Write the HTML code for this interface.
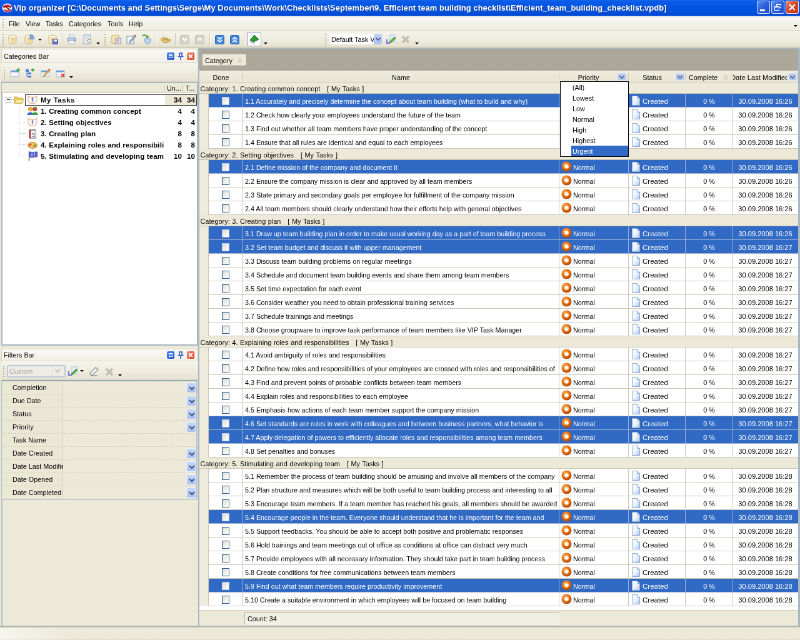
<!DOCTYPE html>
<html><head><meta charset="utf-8"><title>Vip organizer</title>
<style>
html,body{margin:0;padding:0;background:#ECE9D8;}
body{width:800px;height:640px;overflow:hidden;position:relative;}
#app{position:absolute;left:0;top:0;width:1280px;height:1024px;transform:scale(.625);transform-origin:0 0;
 font-family:"Liberation Sans",sans-serif;font-size:10.8px;color:#000;overflow:hidden;will-change:transform;}
#app div,#app span,#app svg{position:absolute;box-sizing:border-box;white-space:pre;}
.t{line-height:14px;height:14px;}
.b{font-weight:bold;font-size:11.5px;letter-spacing:.12px;}
.tb{background:linear-gradient(#F5F4EB,#EFEDE0 50%,#E7E4D3 90%,#D8D4C1);}
.grip{width:3px;border-left:2px dotted #B5B19F;}
.sep{width:2px;border-left:1px solid #C5C2B0;border-right:1px solid #fff;}
.arr{width:0;height:0;border:3px solid transparent;border-top:3px solid #000;border-bottom:none;}
.ptitle{background:linear-gradient(#FBFAF7,#F1EFE6);border:1px solid #DAD6C4;border-radius:4px 4px 0 0;}
.row{left:319px;width:958px;height:22px;background:#fff;}
.row.sel{background:#316AC5;color:#fff;}
.row .ind{left:0;top:0;width:15px;height:22px;background:#EEEBDC;border-right:1px solid #CAC7BA;}
.row .ln{top:0;width:1px;height:22px;background:#CAC7BA;}
.row.sel .ln{background:#9CADD0;}
.row .hb{left:15px;right:0;bottom:0;height:1px;background:#CAC7BA;}
.row.sel .hb{background:#9CADD0;}
.cat{left:319px;width:958px;height:18px;background:#ECE9D8;border-bottom:1px solid #C9C6B5;}
.cb{left:35.500px;top:5px;width:12.500px;height:12.500px;border:1px solid #2C5C8C;background:linear-gradient(135deg,#DCDCD7,#F3F3EF 60%,#fff);}
.sel .cb{border-color:#B8CCEC;}
.fbtn{width:14px;height:12px;background:#B4C6EE;border:1px solid #DCE5F8;}
.hd{top:3px;height:13px;border-right:1px solid #CFCBBA;}
.frow{left:3px;width:311px;height:21px;border-bottom:1px dashed #D6D3C3;}
.dd{left:295px;top:2px;width:16px;height:17px;background:linear-gradient(#C9D7F8,#ABC0F0);border:1px solid #EEF2FB;border-radius:3px;}
</style></head><body><div id="app">

<div style="left:0;top:0;width:1280px;height:26px;background:linear-gradient(#1565EE 0,#0A5CE8 10%,#0354E0 50%,#0453E2 76%,#0248CC 88%,#0A50D8 94%,#2A70F0 100%);"></div>
<svg style="left:3px;top:4px" width="17" height="17" viewBox="0 0 17 17"><ellipse cx="8.5" cy="8.5" rx="8" ry="7" fill="#F4F0F0"/><path d="M1 6 Q8 1 16 6 L14 9 Q8 5 3 9Z" fill="#C8202C"/><path d="M3 10 Q8 14 15 10 L13 14 Q8 16 4 14Z" fill="#D84050"/><path d="M4 5 L13 12" stroke="#8A1820" stroke-width="2"/></svg>
<span style="left:22px;top:4px;height:18px;line-height:18px;font-size:13px;font-weight:bold;color:#fff;letter-spacing:0.03px;text-shadow:1px 1px 0 #0A2A80;">Vip organizer [C:\Documents and Settings\Serge\My Documents\Work\Checklists\September\9. Efficient team building checklist\Efficient_team_building_checklist.vpdb]</span>
<div style="left:1211px;top:1px;width:21px;height:21px;border:1px solid rgba(255,255,255,.8);border-radius:3px;background:linear-gradient(135deg,#5C92F5,#2D62DB 45%,#2050C8);"></div>
<div style="left:1234px;top:1px;width:21px;height:21px;border:1px solid rgba(255,255,255,.8);border-radius:3px;background:linear-gradient(135deg,#5C92F5,#2D62DB 45%,#2050C8);"></div>
<div style="left:1257px;top:1px;width:21px;height:21px;border:1px solid rgba(255,255,255,.8);border-radius:3px;background:linear-gradient(135deg,#E9866A,#D6482A 45%,#C2371C);"></div>
<div style="left:1216px;top:15px;width:8px;height:3px;background:#fff;"></div>
<div style="left:1242px;top:6px;width:8px;height:7px;border:1px solid #fff;border-top-width:2px;"></div>
<div style="left:1239px;top:10px;width:8px;height:7px;border:1px solid #fff;border-top-width:2px;background:#2D62DB;"></div>
<svg style="left:1262px;top:6px" width="11" height="11" viewBox="0 0 11 11"><path d="M1 1L10 10M10 1L1 10" stroke="#fff" stroke-width="2.2"/></svg>
<div style="left:0;top:26px;width:1280px;height:23px;background:linear-gradient(#F8F7F2,#F0EEE2);border-bottom:1px solid #D8D4C2;"></div>
<div class="grip" style="left:4px;top:30px;height:15px;"></div>
<span class="t " style="left:14px;top:31px;">File</span>
<span class="t " style="left:41px;top:31px;">View</span>
<span class="t " style="left:73px;top:31px;">Tasks</span>
<span class="t " style="left:110px;top:31px;">Categories</span>
<span class="t " style="left:172px;top:31px;">Tools</span>
<span class="t " style="left:206px;top:31px;">Help</span>
<div class="arr" style="left:1270px;top:40px;"></div>
<div class="tb" style="left:0;top:49px;width:1280px;height:28px;border-bottom:1px solid #C9C5B2;"></div>
<div class="grip" style="left:4px;top:54px;height:19px;"></div>
<div class="grip" style="left:520px;top:54px;height:19px;"></div>
<div class="grip" style="left:167px;top:54px;height:19px;"></div>
<div class="sep" style="left:99px;top:53px;height:20px;"></div>
<div class="sep" style="left:249px;top:53px;height:20px;"></div>
<div class="sep" style="left:280px;top:53px;height:20px;"></div>
<div class="sep" style="left:335px;top:53px;height:20px;"></div>
<div class="sep" style="left:390px;top:53px;height:20px;"></div>
<div class="arr" style="left:61px;top:62px;"></div>
<div class="arr" style="left:154px;top:68px;"></div>
<div class="arr" style="left:422px;top:68px;"></div>
<div class="arr" style="left:664px;top:68px;"></div>
<svg style="left:13px;top:55px" width="16" height="16" viewBox="0 0 16 16"><path d="M1 3.5V12.5C1 14 4 15 7 15S13 14 13 12.5V3.5" fill="#F4E6AC" stroke="#C8AC70" stroke-width=".9"/><ellipse cx="7" cy="3.5" rx="6" ry="2.5" fill="#FFFBE4" stroke="#C8AC70" stroke-width=".9"/><path d="M1 7C2 8.5 12 8.5 13 7M1 10C2 11.5 12 11.5 13 10" fill="none" stroke="#D0B478" stroke-width=".8"/><path d="M3 5.500v8" stroke="#FFFDF0" stroke-width="1.600"/></svg>
<svg style="left:39px;top:55px" width="16" height="16" viewBox="0 0 16 16"><path d="M1 3.5V12.5C1 14 4 15 7 15S13 14 13 12.5V3.5" fill="#F4E6AC" stroke="#C8AC70" stroke-width=".9"/><ellipse cx="7" cy="3.5" rx="6" ry="2.5" fill="#FFFBE4" stroke="#C8AC70" stroke-width=".9"/><path d="M1 7C2 8.5 12 8.5 13 7M1 10C2 11.5 12 11.5 13 10" fill="none" stroke="#D0B478" stroke-width=".8"/><path d="M3 5.500v8" stroke="#FFFDF0" stroke-width="1.600"/><path d="M9 1h4l2.500 2.500v4h-6.500z" fill="#86A8E4" stroke="#4C6CB4" stroke-width=".8"/></svg>
<svg style="left:77px;top:55px" width="16" height="16" viewBox="0 0 16 16"><path d="M1 3.5V12.5C1 14 4 15 7 15S13 14 13 12.5V3.5" fill="#F4E6AC" stroke="#C8AC70" stroke-width=".9"/><ellipse cx="7" cy="3.5" rx="6" ry="2.5" fill="#FFFBE4" stroke="#C8AC70" stroke-width=".9"/><path d="M1 7C2 8.5 12 8.5 13 7M1 10C2 11.5 12 11.5 13 10" fill="none" stroke="#D0B478" stroke-width=".8"/><path d="M3 5.500v8" stroke="#FFFDF0" stroke-width="1.600"/><rect x="7.500" y="8" width="8" height="7.500" fill="#5C6CC4" stroke="#3C4890" stroke-width=".8"/><rect x="9" y="8.500" width="5" height="3" fill="#F0F2FC"/></svg>
<svg style="left:107px;top:55px" width="16" height="16" viewBox="0 0 16 16"><rect x="3.500" y="1" width="8" height="5" fill="#fff" stroke="#8C9CB8" stroke-width=".8"/><rect x="1.500" y="5.500" width="12" height="6" rx="1" fill="#B8C8E8" stroke="#6478A8" stroke-width=".9"/><rect x="3.500" y="10" width="8" height="5" fill="#fff" stroke="#8C9CB8" stroke-width=".8"/></svg>
<svg style="left:132px;top:55px" width="16" height="16" viewBox="0 0 16 16"><rect x="2" y="1" width="11" height="14" fill="#F2F6FC" stroke="#8FA3C6"/><path d="M4 4h7M4 7h7M4 10h5" stroke="#9CB4DC" stroke-width="1"/><circle cx="11" cy="11" r="3" fill="#DDE9F9" stroke="#C89048"/></svg>
<svg style="left:178px;top:55px" width="16" height="16" viewBox="0 0 16 16"><rect x="1" y="2" width="11" height="12" fill="#FFF3C0" stroke="#C8A040"/><rect x="6" y="6" width="9" height="9" fill="#F2F6FC" stroke="#7C8CA8"/><path d="M8 9h5M8 12h5" stroke="#C84040" stroke-width="1"/></svg>
<svg style="left:202px;top:55px" width="16" height="16" viewBox="0 0 16 16"><rect x="1" y="3" width="11" height="12" fill="#F2F6FC" stroke="#7C8CA8"/><path d="M5 11L14 1.5L15.5 3L7 12.5L4.5 13Z" fill="#9CB0D4" stroke="#5C6C94" stroke-width=".8"/><path d="M13 1l2.5 2" stroke="#E05040" stroke-width="2"/></svg>
<svg style="left:226px;top:55px" width="16" height="16" viewBox="0 0 16 16"><path d="M2 2C6 0 9 2 10 5" fill="none" stroke="#4C9C3C" stroke-width="2"/><path d="M7 4l4 3 1-5z" fill="#4C9C3C"/><path d="M5 7c0 5 2 7 5.500 8.500C14 14 15 12 15 7 12 7.500 9 7 8 6 7 7 6 7.500 5 7z" fill="#BFD6F4" stroke="#6C94D4"/></svg>
<svg style="left:256px;top:56px" width="18" height="16" viewBox="0 0 18 16"><path d="M1 7L5 4L10 5L17 8L12 12L6 12Z" fill="#E8C46C" stroke="#A87C2C" stroke-width="1"/><path d="M5 8l4-2 4 3" fill="none" stroke="#A87C2C"/></svg>
<svg style="left:288px;top:56px" width="15" height="15" viewBox="0 0 15 15"><rect x="0.5" y="0.5" width="14" height="14" rx="2" fill="#D6D4CA" stroke="#BEBBAE"/><path d="M4 5l3.500 4L11 5" fill="none" stroke="#fff" stroke-width="2"/></svg>
<svg style="left:312px;top:56px" width="15" height="15" viewBox="0 0 15 15"><rect x="0.5" y="0.5" width="14" height="14" rx="2" fill="#D6D4CA" stroke="#BEBBAE"/><path d="M4 9l3.500-4L11 9" fill="none" stroke="#fff" stroke-width="2"/></svg>
<svg style="left:344px;top:56px" width="15" height="15" viewBox="0 0 15 15"><rect x="0.5" y="0.5" width="14" height="14" rx="2" fill="#3F86DC" stroke="#2C62B4"/><path d="M4 3.500l3.500 3L11 3.500M4 8l3.500 3L11 8" fill="none" stroke="#fff" stroke-width="1.800"/></svg>
<svg style="left:368px;top:56px" width="15" height="15" viewBox="0 0 15 15"><rect x="0.5" y="0.5" width="14" height="14" rx="2" fill="#3F86DC" stroke="#2C62B4"/><path d="M4 7l3.500-3L11 7M4 11.500l3.500-3L11 11.500" fill="none" stroke="#fff" stroke-width="1.800"/></svg>
<div style="left:395px;top:51px;width:23px;height:23px;background:#fff;border:1px solid #8A9CBC;border-radius:2px;"></div>
<svg style="left:398px;top:54px" width="18" height="17" viewBox="0 0 18 17"><path d="M2 10L9 2L16 9L8 13Z" fill="#2E9A36" stroke="#1C6C24" stroke-width="1"/><path d="M2 11l6 3 1 2-6-2z" fill="#C8D8EC" stroke="#8CA0BC" stroke-width=".7"/></svg>
<div style="left:528px;top:54px;width:83px;height:17px;background:#fff;overflow:hidden;"><span class="t" style="left:2px;top:2px;">Default Task View</span><div style="left:70px;top:0;width:13px;height:17px;background:linear-gradient(#C4D4F8,#AEC2F2);border-radius:2px;"></div></div>
<svg style="left:601px;top:60px" width="8" height="6" viewBox="0 0 8 6"><path d="M0.5 0.5 L4 4 L7.5 0.5" fill="none" stroke="#3C5080" stroke-width="1.6"/></svg>
<svg style="left:618px;top:55px" width="18" height="16" viewBox="0 0 18 16"><path d="M1 8v6h5" fill="none" stroke="#7C74D4" stroke-width="2"/><rect x="6" y="1" width="8" height="11" fill="#E9F1FC" stroke="#9CB4DC" stroke-width=".8"/><path d="M5 12l8-8 2 2-8 8z" fill="#4CB43C" stroke="#2C7C24" stroke-width=".7"/></svg>
<svg style="left:642px;top:56px" width="14" height="14" viewBox="0 0 14 14"><path d="M2 2L12 12M12 2L2 12" stroke="#C3C0B3" stroke-width="3.600"/></svg>
<div class="ptitle" style="left:2px;top:78px;width:314px;height:23px;"></div>
<span class="t " style="left:6px;top:83px;">Categories Bar</span>
<div style="left:267px;top:84px;width:12px;height:12px;background:linear-gradient(135deg,#4C8CF0,#1C50C8);border-radius:2px;"></div>
<div style="left:270px;top:87px;width:6px;height:6px;border:1px solid #fff;border-top-width:2px;"></div>
<svg style="left:283px;top:84px" width="12" height="12" viewBox="0 0 12 12"><path d="M3 1h6M4 1v5M8 1v5M1.500 6.500h9M6 7v5" stroke="#2C5CC4" stroke-width="1.600" fill="none"/></svg>
<div style="left:299px;top:84px;width:12px;height:12px;background:linear-gradient(135deg,#F08C6C,#D03C1C);border-radius:2px;"></div>
<svg style="left:301px;top:86px" width="8" height="8" viewBox="0 0 8 8"><path d="M1 1L7 7M7 1L1 7" stroke="#fff" stroke-width="1.800"/></svg>
<div class="tb" style="left:2px;top:101px;width:314px;height:30px;"></div>
<div class="grip" style="left:6px;top:107px;height:19px;"></div>
<svg style="left:16px;top:109px" width="16" height="16" viewBox="0 0 16 16"><rect x="1" y="4" width="13" height="10" fill="#F6F8FC" stroke="#A4B4D0" stroke-width=".9"/><rect x="1" y="4" width="13" height="2.500" fill="#6C9CE0"/><path d="M1.500 13.500h12" stroke="#C8D0DC" stroke-width="1.500"/><path d="M9 3h6M12.500 0.500L15 3l-2.500 2.500" fill="none" stroke="#3CA43C" stroke-width="1.600"/></svg>
<svg style="left:40px;top:109px" width="16" height="16" viewBox="0 0 16 16"><rect x="1" y="2" width="5" height="4" fill="#4C7CD4"/><rect x="5" y="7" width="5" height="3" fill="#4C7CD4"/><rect x="5" y="12" width="5" height="3" fill="#4C7CD4"/><path d="M3 6v7.500h2M3 8.500h2" fill="none" stroke="#4C7CD4"/><path d="M10 3h5M12.500 0.500v5" stroke="#3CA43C" stroke-width="1.800"/></svg>
<svg style="left:65px;top:109px" width="16" height="16" viewBox="0 0 16 16"><rect x="1" y="4" width="13" height="10" fill="#F6F8FC" stroke="#A4B4D0" stroke-width=".9"/><rect x="1" y="4" width="13" height="2.500" fill="#6C9CE0"/><path d="M1.500 13.500h12" stroke="#C8D0DC" stroke-width="1.500"/><path d="M5 11L13 2l2 1.500L7 12.500l-2.500.5z" fill="#E8B84C" stroke="#8A5A20" stroke-width=".7"/><path d="M13 1.500l2 2" stroke="#D84040" stroke-width="2"/></svg>
<svg style="left:89px;top:109px" width="16" height="16" viewBox="0 0 16 16"><rect x="1" y="4" width="13" height="10" fill="#F6F8FC" stroke="#A4B4D0" stroke-width=".9"/><rect x="1" y="4" width="13" height="2.500" fill="#6C9CE0"/><path d="M1.500 13.500h12" stroke="#C8D0DC" stroke-width="1.500"/><path d="M9 9l5 5M14 9l-5 5" stroke="#E03C2C" stroke-width="1.800"/></svg>
<div class="arr" style="left:111px;top:122px;"></div>
<div style="left:2px;top:131px;width:315px;height:422px;background:#fff;border:2px solid #A7B7C3;"></div>
<div style="left:3px;top:133px;width:312px;height:16px;background:#ECE9D8;border-bottom:1px solid #CBC7B6;"></div>
<div style="left:262px;top:136px;width:1px;height:11px;background:#C5C2B0;"></div>
<div style="left:292px;top:136px;width:1px;height:11px;background:#C5C2B0;"></div>
<span class="t " style="left:267px;top:134px;">Un...</span>
<span class="t " style="left:297px;top:134px;">T...</span>
<div style="left:264px;top:151px;width:50px;height:17px;background:#ECE9D8;"></div>
<div style="left:40px;top:151px;width:275px;height:18px;border:1px solid #33322C;"></div>
<div style="left:9px;top:155px;width:9px;height:9px;border:1px solid #8CA0B8;background:#fff;"></div><div style="left:11px;top:159px;width:5px;height:1px;background:#000;"></div>
<div style="left:30px;top:168px;width:1px;height:82px;border-left:1px dotted #BDBDBD;"></div>
<div style="left:31px;top:177px;width:11px;height:1px;border-top:1px dotted #BDBDBD;"></div>
<div style="left:31px;top:195px;width:11px;height:1px;border-top:1px dotted #BDBDBD;"></div>
<div style="left:31px;top:213px;width:11px;height:1px;border-top:1px dotted #BDBDBD;"></div>
<div style="left:31px;top:231px;width:11px;height:1px;border-top:1px dotted #BDBDBD;"></div>
<div style="left:31px;top:249px;width:11px;height:1px;border-top:1px dotted #BDBDBD;"></div>
<div style="left:18px;top:159px;width:4px;height:1px;border-top:1px dotted #BDBDBD;"></div>
<svg style="left:22px;top:151px" width="17" height="16" viewBox="0 0 17 16"><path d="M1 4h5l1.500 2H14v8H1z" fill="#F2D454" stroke="#C4A030" stroke-width=".9"/><path d="M1 14l3-6h12l-3 6z" fill="#FFF0A0" stroke="#C4A030" stroke-width=".9"/></svg>
<svg style="left:43px;top:151px" width="18" height="17" viewBox="0 0 18 17"><path d="M2.500 2.500L5.500 5Q9 3 12.500 5L15.500 2.500Q17.500 8.500 14.500 12.500Q9 17 3.500 12.500Q.5 8.500 2.500 2.500Z" fill="#FFFAF6" stroke="#EFAA88" stroke-width="1.100"/><circle cx="9" cy="6.500" r="1.300" fill="#4C70C8"/><path d="M9 8.500v4M7.500 9.500Q9 8 10.500 9.500" stroke="#5C80D4" stroke-width="1.200" fill="none"/></svg>
<div style="left:65px;top:151px;width:197px;height:16px;overflow:hidden;"><span class="t b" style="left:0;top:2px;letter-spacing:.5px;">My Tasks</span></div>
<span class="t b" style="right:989px;top:153px;">34</span>
<span class="t b" style="right:968px;top:153px;">34</span>
<svg style="left:43px;top:169px" width="18" height="17" viewBox="0 0 18 17"><path d="M.5 15c0-6 10-6 10 0z" fill="#3C68D0"/><circle cx="5.500" cy="5.500" r="3.300" fill="#F4A848" stroke="#C07820" stroke-width=".6"/><path d="M8 15c0-6 10-6 10 0z" fill="#3CA040"/><circle cx="12.800" cy="5.500" r="3.300" fill="#B05C28" stroke="#80401C" stroke-width=".6"/></svg>
<div style="left:65px;top:169px;width:197px;height:16px;overflow:hidden;"><span class="t b" style="left:0;top:2px;">1. Creating common concept</span></div>
<span class="t b" style="right:989px;top:171px;">4</span>
<span class="t b" style="right:968px;top:171px;">4</span>
<svg style="left:43px;top:187px" width="18" height="17" viewBox="0 0 18 17"><path d="M2.500 2.500L5.500 5Q9 3 12.500 5L15.500 2.500Q17.500 8.500 14.500 12.500Q9 17 3.500 12.500Q.5 8.500 2.500 2.500Z" fill="#FFFAF6" stroke="#EFAA88" stroke-width="1.100"/><circle cx="9" cy="6.500" r="1.300" fill="#4C70C8"/><path d="M9 8.500v4M7.500 9.500Q9 8 10.500 9.500" stroke="#5C80D4" stroke-width="1.200" fill="none"/></svg>
<div style="left:65px;top:187px;width:197px;height:16px;overflow:hidden;"><span class="t b" style="left:0;top:2px;">2. Setting objectives</span></div>
<span class="t b" style="right:989px;top:189px;">4</span>
<span class="t b" style="right:968px;top:189px;">4</span>
<svg style="left:43px;top:205px" width="18" height="17" viewBox="0 0 18 17"><rect x="3.500" y="3" width="11" height="13" fill="#FAFAFA" stroke="#5C5C68" stroke-width="1"/><rect x="3.500" y="3" width="3" height="13" fill="#B85050"/><path d="M6 1v3M9 1v3M12 1v3" stroke="#5C5C68" stroke-width="1"/><path d="M9.500 8h3M9.500 8v2.500h2.500v3h-3" stroke="#606878" stroke-width="1" fill="none"/></svg>
<div style="left:65px;top:205px;width:197px;height:16px;overflow:hidden;"><span class="t b" style="left:0;top:2px;">3. Creating plan</span></div>
<span class="t b" style="right:989px;top:207px;">8</span>
<span class="t b" style="right:968px;top:207px;">8</span>
<svg style="left:43px;top:223px" width="18" height="17" viewBox="0 0 18 17"><ellipse cx="9" cy="9.500" rx="7.500" ry="4.800" fill="#F0B048" stroke="#B87828" stroke-width=".9"/><circle cx="5.500" cy="8.500" r="1.700" fill="#E04830"/><circle cx="9.500" cy="7.300" r="1.600" fill="#F8E050"/><circle cx="12.500" cy="10" r="1.700" fill="#48A848"/><circle cx="7.500" cy="11.800" r="1.300" fill="#F8F0D8"/></svg>
<div style="left:65px;top:223px;width:197px;height:16px;overflow:hidden;"><span class="t b" style="left:0;top:2px;">4. Explaining roles and responsibilities</span></div>
<span class="t b" style="right:989px;top:225px;">8</span>
<span class="t b" style="right:968px;top:225px;">8</span>
<svg style="left:43px;top:241px" width="18" height="17" viewBox="0 0 18 17"><path d="M3.500 1v15.500" stroke="#585868" stroke-width="1.400"/><path d="M4.200 2.500c2.500-1.500 4.500 1 7 0s3.500-.5 5.500-.5v8c-2 0-3-.5-5.500 .5s-4.500 1-7-.5z" fill="#5860CC" stroke="#3840A0" stroke-width=".7"/><path d="M8 3.500v6.500M12 3v6.500" stroke="#A8B0EC" stroke-width="1.600"/></svg>
<div style="left:65px;top:241px;width:197px;height:16px;overflow:hidden;"><span class="t b" style="left:0;top:2px;">5. Stimulating and developing team</span></div>
<span class="t b" style="right:989px;top:243px;">10</span>
<span class="t b" style="right:968px;top:243px;">10</span>
<div class="ptitle" style="left:2px;top:558px;width:314px;height:20px;"></div>
<span class="t " style="left:6px;top:561px;">Filters Bar</span>
<div style="left:267px;top:562px;width:12px;height:12px;background:linear-gradient(135deg,#4C8CF0,#1C50C8);border-radius:2px;"></div>
<div style="left:270px;top:565px;width:6px;height:6px;border:1px solid #fff;border-top-width:2px;"></div>
<svg style="left:283px;top:562px" width="12" height="12" viewBox="0 0 12 12"><path d="M3 1h6M4 1v5M8 1v5M1.500 6.500h9M6 7v5" stroke="#2C5CC4" stroke-width="1.600" fill="none"/></svg>
<div style="left:299px;top:562px;width:12px;height:12px;background:linear-gradient(135deg,#F08C6C,#D03C1C);border-radius:2px;"></div>
<svg style="left:301px;top:564px" width="8" height="8" viewBox="0 0 8 8"><path d="M1 1L7 7M7 1L1 7" stroke="#fff" stroke-width="1.800"/></svg>
<div class="tb" style="left:2px;top:578px;width:314px;height:31px;"></div>
<div class="grip" style="left:5px;top:586px;height:17px;"></div>
<div style="left:11px;top:584px;width:94px;height:20px;background:#EDEDE6;border:2px solid #BCCBDC;border-radius:2px;"><span class="t" style="left:2px;top:1px;color:#ACA899;">Custom</span><div style="left:70px;top:0;width:1px;height:16px;background:#D5D9DE;"></div></div>
<svg style="left:88px;top:591px" width="8" height="6" viewBox="0 0 8 6"><path d="M0.5 0.5 L4 4 L7.5 0.5" fill="none" stroke="#BDBAAE" stroke-width="1.6"/></svg>
<svg style="left:109px;top:586px" width="18" height="16" viewBox="0 0 18 16"><path d="M1 8v6h5" fill="none" stroke="#7C74D4" stroke-width="2"/><rect x="6" y="1" width="8" height="11" fill="#E9F1FC" stroke="#9CB4DC" stroke-width=".8"/><path d="M5 12l8-8 2 2-8 8z" fill="#4CB43C" stroke="#2C7C24" stroke-width=".7"/></svg>
<div class="arr" style="left:128px;top:592px;"></div>
<svg style="left:142px;top:586px" width="17" height="16" viewBox="0 0 17 16"><path d="M2 11L11 2l4 3-9 9H3z" fill="#F8F8F8" stroke="#808890" stroke-width="1.200"/><path d="M3 15h11" stroke="#808890" stroke-width="1.200"/></svg>
<svg style="left:168px;top:588px" width="14" height="14" viewBox="0 0 14 14"><path d="M2 2L12 12M12 2L2 12" stroke="#C3C0B3" stroke-width="3.600"/></svg>
<div class="arr" style="left:189px;top:599px;"></div>
<div style="left:2px;top:608px;width:314px;height:192px;background:#ECE9D8;border:1px solid #A7B7C3;border-top:2px solid #95A5B1;border-right:2px solid #B5C3CD;border-bottom:2px solid #BFC9CF;"></div>
<div style="left:3px;top:610px;width:98px;height:188px;background:#EAE7D5;border-right:1px solid #D0CCBA;"></div>
<div style="left:102px;top:610px;width:1px;height:188px;background:#F8F7F0;"></div>
<div class="frow" style="top:610px;"><div style="left:0;top:0;width:98px;height:20px;overflow:hidden;"><span class="t" style="left:17px;top:3px;">Completion</span></div><div class="dd"></div></div>
<svg style="left:302px;top:618px" width="10" height="7" viewBox="0 0 10 7"><path d="M1 1 L5 5 L9 1" fill="none" stroke="#3C5080" stroke-width="2"/></svg>
<div class="frow" style="top:631px;"><div style="left:0;top:0;width:98px;height:20px;overflow:hidden;"><span class="t" style="left:17px;top:3px;">Due Date</span></div><div class="dd"></div></div>
<svg style="left:302px;top:639px" width="10" height="7" viewBox="0 0 10 7"><path d="M1 1 L5 5 L9 1" fill="none" stroke="#3C5080" stroke-width="2"/></svg>
<div class="frow" style="top:652px;"><div style="left:0;top:0;width:98px;height:20px;overflow:hidden;"><span class="t" style="left:17px;top:3px;">Status</span></div><div class="dd"></div></div>
<svg style="left:302px;top:660px" width="10" height="7" viewBox="0 0 10 7"><path d="M1 1 L5 5 L9 1" fill="none" stroke="#3C5080" stroke-width="2"/></svg>
<div class="frow" style="top:673px;"><div style="left:0;top:0;width:98px;height:20px;overflow:hidden;"><span class="t" style="left:17px;top:3px;">Priority</span></div><div class="dd"></div></div>
<svg style="left:302px;top:681px" width="10" height="7" viewBox="0 0 10 7"><path d="M1 1 L5 5 L9 1" fill="none" stroke="#3C5080" stroke-width="2"/></svg>
<div class="frow" style="top:694px;"><div style="left:0;top:0;width:98px;height:20px;overflow:hidden;"><span class="t" style="left:17px;top:3px;">Task Name</span></div></div>
<div class="frow" style="top:715px;"><div style="left:0;top:0;width:98px;height:20px;overflow:hidden;"><span class="t" style="left:17px;top:3px;">Date Created</span></div><div class="dd"></div></div>
<svg style="left:302px;top:723px" width="10" height="7" viewBox="0 0 10 7"><path d="M1 1 L5 5 L9 1" fill="none" stroke="#3C5080" stroke-width="2"/></svg>
<div class="frow" style="top:736px;"><div style="left:0;top:0;width:98px;height:20px;overflow:hidden;"><span class="t" style="left:17px;top:3px;">Date Last Modified</span></div><div class="dd"></div></div>
<svg style="left:302px;top:744px" width="10" height="7" viewBox="0 0 10 7"><path d="M1 1 L5 5 L9 1" fill="none" stroke="#3C5080" stroke-width="2"/></svg>
<div class="frow" style="top:757px;"><div style="left:0;top:0;width:98px;height:20px;overflow:hidden;"><span class="t" style="left:17px;top:3px;">Date Opened</span></div><div class="dd"></div></div>
<svg style="left:302px;top:765px" width="10" height="7" viewBox="0 0 10 7"><path d="M1 1 L5 5 L9 1" fill="none" stroke="#3C5080" stroke-width="2"/></svg>
<div class="frow" style="top:778px;"><div style="left:0;top:0;width:98px;height:20px;overflow:hidden;"><span class="t" style="left:17px;top:3px;">Date Completed</span></div><div class="dd"></div></div>
<svg style="left:302px;top:786px" width="10" height="7" viewBox="0 0 10 7"><path d="M1 1 L5 5 L9 1" fill="none" stroke="#3C5080" stroke-width="2"/></svg>
<div style="left:2px;top:800px;width:2px;height:202px;background:#AFBDC7;"></div>
<div style="left:0;top:1001px;width:1280px;height:2px;background:#AEB6B4;"></div>
<div style="left:0;top:1003px;width:1280px;height:21px;background:linear-gradient(#D8D5C4,#ECE9D8 15%,#EEEBDC 80%,#E3E0CF);"></div>
<div style="left:0;top:1005px;width:110px;height:19px;background:linear-gradient(90deg,rgba(255,255,255,.55),rgba(255,255,255,0));"></div>
<div style="left:317px;top:77px;width:963px;height:925px;background:#A7B7C3;"></div>
<div style="left:319px;top:78px;width:958px;height:923px;background:#fff;"></div>
<div style="left:319px;top:78px;width:958px;height:35px;background:#ACA899;"></div>
<div style="left:324px;top:87px;width:70px;height:18px;background:#ECE9D8;border:1px solid #F6F5EE;border-right-color:#CFCBBA;border-bottom-color:#CFCBBA;border-radius:2px;"><span class="t" style="left:3px;top:2px;">Category</span></div>
<svg style="left:380px;top:92px" width="8" height="8" viewBox="0 0 8 8"><path d="M4 1L7 7H1Z" fill="#F4F2E8" stroke="#B5B2A2" stroke-width=".9"/></svg>
<div style="left:319px;top:113px;width:958px;height:19px;background:linear-gradient(#F0EEE2,#ECE9D8 40%,#E9E6D5);border-bottom:1px solid #CBC7B6;overflow:hidden;">
<div class="hd" style="left:0px;width:69px;"></div>
<div class="hd" style="left:69px;width:507px;"></div>
<div class="hd" style="left:576px;width:111px;"></div>
<div class="hd" style="left:687px;width:91px;"></div>
<div class="hd" style="left:778px;width:75px;"></div>
<div class="hd" style="left:853px;width:105px;"></div>
<span class="t" style="left:0px;width:69px;top:4px;text-align:center;">Done</span>
<span class="t" style="left:69px;width:507px;top:4px;text-align:center;">Name</span>
<span class="t" style="left:576px;width:93px;top:4px;text-align:center;">Priority</span>
<span class="t" style="left:687px;width:75px;top:4px;text-align:center;">Status</span>
<span class="t" style="left:783px;top:4px;">Complete</span>
<svg style="left:838px;top:6px" width="8" height="8" viewBox="0 0 8 8"><path d="M4 1L7 7H1Z" fill="#F4F2E8" stroke="#B5B2A2" stroke-width=".9"/></svg>
<div style="left:854px;top:0;width:86px;height:19px;overflow:hidden;"><span class="t" style="left:-4px;top:4px;font-size:11.2px;">Date Last Modified</span></div>
<div class="fbtn" style="left:669px;top:4px;"></div>
<div class="fbtn" style="left:762px;top:4px;"></div>
<div class="fbtn" style="left:942px;top:4px;"></div>
</div>
<svg style="left:991px;top:121px" width="8" height="6" viewBox="0 0 8 6"><path d="M0.5 0.5 L4 4 L7.5 0.5" fill="none" stroke="#4D6185" stroke-width="1.6"/></svg>
<svg style="left:1084px;top:121px" width="8" height="6" viewBox="0 0 8 6"><path d="M0.5 0.5 L4 4 L7.5 0.5" fill="none" stroke="#4D6185" stroke-width="1.6"/></svg>
<svg style="left:1264px;top:121px" width="8" height="6" viewBox="0 0 8 6"><path d="M0.5 0.5 L4 4 L7.5 0.5" fill="none" stroke="#4D6185" stroke-width="1.6"/></svg>
<div class="cat" style="top:132px;"><span class="t" style="left:1.500px;top:3px;font-size:10.9px;word-spacing:.6px;">Category: 1. Creating common concept   [ My Tasks ]</span></div>
<div class="row sel" style="top:150px;"><div class="ind"></div><div class="cb"></div>
<div class="ln" style="left:68px;"></div>
<div class="ln" style="left:575px;"></div>
<div class="ln" style="left:686px;"></div>
<div class="ln" style="left:777px;"></div>
<div class="ln" style="left:852px;"></div>
<div style="left:69px;top:0;width:505px;height:21px;overflow:hidden;"><span class="t" style="left:4px;top:5px;font-size:10.72px;">1.1 Accurately and precisely determine the concept about team building (what to build and why)</span></div>
<svg style="left:579px;top:2px" width="17" height="17" viewBox="0 0 16 16"><defs><radialGradient id="g" cx=".4" cy=".35" r=".7"><stop offset="0" stop-color="#FFB868"/><stop offset=".5" stop-color="#EC7414"/><stop offset="1" stop-color="#A84408"/></radialGradient></defs><circle cx="8" cy="8" r="7.500" fill="url(#g)"/><circle cx="8" cy="8" r="3.100" fill="#FFF6EA"/></svg><span class="t" style="left:598px;top:5px;">Normal</span>
<svg style="left:692px;top:3px" width="13" height="16" viewBox="0 0 13 16"><defs><linearGradient id="d" x1="0" y1="0" x2="1" y2="1"><stop offset="0" stop-color="#fff"/><stop offset=".5" stop-color="#EEF4FC"/><stop offset="1" stop-color="#A8C8F0"/></linearGradient></defs><path d="M.5.5h8l4 4v11H.5z" fill="url(#d)" stroke="#8CA8D0" stroke-width="1"/><path d="M8.500.5v4h4" fill="#DCE8F8" stroke="#8CA8D0" stroke-width="1"/></svg><span class="t" style="left:709px;top:5px;font-size:11.5px;">Created</span>
<span class="t" style="left:778px;width:75px;top:5px;text-align:center;">0 %</span>
<span class="t" style="left:853px;width:105px;top:5px;text-align:center;font-size:11.1px;">30.09.2008 16:26</span>
<div class="hb"></div></div>
<div class="row" style="top:172px;"><div class="ind"></div><div class="cb"></div>
<div class="ln" style="left:68px;"></div>
<div class="ln" style="left:575px;"></div>
<div class="ln" style="left:686px;"></div>
<div class="ln" style="left:777px;"></div>
<div class="ln" style="left:852px;"></div>
<div style="left:69px;top:0;width:505px;height:21px;overflow:hidden;"><span class="t" style="left:4px;top:5px;font-size:10.72px;">1.2 Check how clearly your employees understand the future of the team</span></div>
<svg style="left:579px;top:2px" width="17" height="17" viewBox="0 0 16 16"><circle cx="8" cy="8" r="7.500" fill="url(#g)"/><circle cx="8" cy="8" r="3.100" fill="#FFF6EA"/></svg><span class="t" style="left:598px;top:5px;">Normal</span>
<svg style="left:692px;top:3px" width="13" height="16" viewBox="0 0 13 16"><path d="M.5.5h8l4 4v11H.5z" fill="url(#d)" stroke="#8CA8D0" stroke-width="1"/><path d="M8.500.5v4h4" fill="#DCE8F8" stroke="#8CA8D0" stroke-width="1"/></svg><span class="t" style="left:709px;top:5px;font-size:11.5px;">Created</span>
<span class="t" style="left:778px;width:75px;top:5px;text-align:center;">0 %</span>
<span class="t" style="left:853px;width:105px;top:5px;text-align:center;font-size:11.1px;">30.09.2008 16:26</span>
<div class="hb"></div></div>
<div class="row" style="top:194px;"><div class="ind"></div><div class="cb"></div>
<div class="ln" style="left:68px;"></div>
<div class="ln" style="left:575px;"></div>
<div class="ln" style="left:686px;"></div>
<div class="ln" style="left:777px;"></div>
<div class="ln" style="left:852px;"></div>
<div style="left:69px;top:0;width:505px;height:21px;overflow:hidden;"><span class="t" style="left:4px;top:5px;font-size:10.72px;">1.3 Find out whether all team members have proper understanding of the concept</span></div>
<svg style="left:579px;top:2px" width="17" height="17" viewBox="0 0 16 16"><circle cx="8" cy="8" r="7.500" fill="url(#g)"/><circle cx="8" cy="8" r="3.100" fill="#FFF6EA"/></svg><span class="t" style="left:598px;top:5px;">Normal</span>
<svg style="left:692px;top:3px" width="13" height="16" viewBox="0 0 13 16"><path d="M.5.5h8l4 4v11H.5z" fill="url(#d)" stroke="#8CA8D0" stroke-width="1"/><path d="M8.500.5v4h4" fill="#DCE8F8" stroke="#8CA8D0" stroke-width="1"/></svg><span class="t" style="left:709px;top:5px;font-size:11.5px;">Created</span>
<span class="t" style="left:778px;width:75px;top:5px;text-align:center;">0 %</span>
<span class="t" style="left:853px;width:105px;top:5px;text-align:center;font-size:11.1px;">30.09.2008 16:26</span>
<div class="hb"></div></div>
<div class="row" style="top:216px;"><div class="ind"></div><div class="cb"></div>
<div class="ln" style="left:68px;"></div>
<div class="ln" style="left:575px;"></div>
<div class="ln" style="left:686px;"></div>
<div class="ln" style="left:777px;"></div>
<div class="ln" style="left:852px;"></div>
<div style="left:69px;top:0;width:505px;height:21px;overflow:hidden;"><span class="t" style="left:4px;top:5px;font-size:10.72px;">1.4 Ensure that all rules are identical and equal to each employees</span></div>
<svg style="left:579px;top:2px" width="17" height="17" viewBox="0 0 16 16"><circle cx="8" cy="8" r="7.500" fill="url(#g)"/><circle cx="8" cy="8" r="3.100" fill="#FFF6EA"/></svg><span class="t" style="left:598px;top:5px;">Normal</span>
<svg style="left:692px;top:3px" width="13" height="16" viewBox="0 0 13 16"><path d="M.5.5h8l4 4v11H.5z" fill="url(#d)" stroke="#8CA8D0" stroke-width="1"/><path d="M8.500.5v4h4" fill="#DCE8F8" stroke="#8CA8D0" stroke-width="1"/></svg><span class="t" style="left:709px;top:5px;font-size:11.5px;">Created</span>
<span class="t" style="left:778px;width:75px;top:5px;text-align:center;">0 %</span>
<span class="t" style="left:853px;width:105px;top:5px;text-align:center;font-size:11.1px;">30.09.2008 16:26</span>
<div class="hb"></div></div>
<div class="cat" style="top:238px;"><span class="t" style="left:1.500px;top:3px;font-size:10.9px;word-spacing:.6px;">Category: 2. Setting objectives   [ My Tasks ]</span></div>
<div class="row sel" style="top:256px;"><div class="ind"></div><div class="cb"></div>
<div class="ln" style="left:68px;"></div>
<div class="ln" style="left:575px;"></div>
<div class="ln" style="left:686px;"></div>
<div class="ln" style="left:777px;"></div>
<div class="ln" style="left:852px;"></div>
<div style="left:69px;top:0;width:505px;height:21px;overflow:hidden;"><span class="t" style="left:4px;top:5px;font-size:10.72px;">2.1 Define mission of the company and document it</span></div>
<svg style="left:579px;top:2px" width="17" height="17" viewBox="0 0 16 16"><circle cx="8" cy="8" r="7.500" fill="url(#g)"/><circle cx="8" cy="8" r="3.100" fill="#FFF6EA"/></svg><span class="t" style="left:598px;top:5px;">Normal</span>
<svg style="left:692px;top:3px" width="13" height="16" viewBox="0 0 13 16"><path d="M.5.5h8l4 4v11H.5z" fill="url(#d)" stroke="#8CA8D0" stroke-width="1"/><path d="M8.500.5v4h4" fill="#DCE8F8" stroke="#8CA8D0" stroke-width="1"/></svg><span class="t" style="left:709px;top:5px;font-size:11.5px;">Created</span>
<span class="t" style="left:778px;width:75px;top:5px;text-align:center;">0 %</span>
<span class="t" style="left:853px;width:105px;top:5px;text-align:center;font-size:11.1px;">30.09.2008 16:26</span>
<div class="hb"></div></div>
<div class="row" style="top:278px;"><div class="ind"></div><div class="cb"></div>
<div class="ln" style="left:68px;"></div>
<div class="ln" style="left:575px;"></div>
<div class="ln" style="left:686px;"></div>
<div class="ln" style="left:777px;"></div>
<div class="ln" style="left:852px;"></div>
<div style="left:69px;top:0;width:505px;height:21px;overflow:hidden;"><span class="t" style="left:4px;top:5px;font-size:10.72px;">2.2 Ensure the company mission is clear and approved by all team members</span></div>
<svg style="left:579px;top:2px" width="17" height="17" viewBox="0 0 16 16"><circle cx="8" cy="8" r="7.500" fill="url(#g)"/><circle cx="8" cy="8" r="3.100" fill="#FFF6EA"/></svg><span class="t" style="left:598px;top:5px;">Normal</span>
<svg style="left:692px;top:3px" width="13" height="16" viewBox="0 0 13 16"><path d="M.5.5h8l4 4v11H.5z" fill="url(#d)" stroke="#8CA8D0" stroke-width="1"/><path d="M8.500.5v4h4" fill="#DCE8F8" stroke="#8CA8D0" stroke-width="1"/></svg><span class="t" style="left:709px;top:5px;font-size:11.5px;">Created</span>
<span class="t" style="left:778px;width:75px;top:5px;text-align:center;">0 %</span>
<span class="t" style="left:853px;width:105px;top:5px;text-align:center;font-size:11.1px;">30.09.2008 16:26</span>
<div class="hb"></div></div>
<div class="row" style="top:300px;"><div class="ind"></div><div class="cb"></div>
<div class="ln" style="left:68px;"></div>
<div class="ln" style="left:575px;"></div>
<div class="ln" style="left:686px;"></div>
<div class="ln" style="left:777px;"></div>
<div class="ln" style="left:852px;"></div>
<div style="left:69px;top:0;width:505px;height:21px;overflow:hidden;"><span class="t" style="left:4px;top:5px;font-size:10.72px;">2.3 State primary and secondary goals per employee for fulfillment of the company mission</span></div>
<svg style="left:579px;top:2px" width="17" height="17" viewBox="0 0 16 16"><circle cx="8" cy="8" r="7.500" fill="url(#g)"/><circle cx="8" cy="8" r="3.100" fill="#FFF6EA"/></svg><span class="t" style="left:598px;top:5px;">Normal</span>
<svg style="left:692px;top:3px" width="13" height="16" viewBox="0 0 13 16"><path d="M.5.5h8l4 4v11H.5z" fill="url(#d)" stroke="#8CA8D0" stroke-width="1"/><path d="M8.500.5v4h4" fill="#DCE8F8" stroke="#8CA8D0" stroke-width="1"/></svg><span class="t" style="left:709px;top:5px;font-size:11.5px;">Created</span>
<span class="t" style="left:778px;width:75px;top:5px;text-align:center;">0 %</span>
<span class="t" style="left:853px;width:105px;top:5px;text-align:center;font-size:11.1px;">30.09.2008 16:26</span>
<div class="hb"></div></div>
<div class="row" style="top:322px;"><div class="ind"></div><div class="cb"></div>
<div class="ln" style="left:68px;"></div>
<div class="ln" style="left:575px;"></div>
<div class="ln" style="left:686px;"></div>
<div class="ln" style="left:777px;"></div>
<div class="ln" style="left:852px;"></div>
<div style="left:69px;top:0;width:505px;height:21px;overflow:hidden;"><span class="t" style="left:4px;top:5px;font-size:10.72px;">2.4 All team members should clearly understand how their efforts help with general objectives</span></div>
<svg style="left:579px;top:2px" width="17" height="17" viewBox="0 0 16 16"><circle cx="8" cy="8" r="7.500" fill="url(#g)"/><circle cx="8" cy="8" r="3.100" fill="#FFF6EA"/></svg><span class="t" style="left:598px;top:5px;">Normal</span>
<svg style="left:692px;top:3px" width="13" height="16" viewBox="0 0 13 16"><path d="M.5.5h8l4 4v11H.5z" fill="url(#d)" stroke="#8CA8D0" stroke-width="1"/><path d="M8.500.5v4h4" fill="#DCE8F8" stroke="#8CA8D0" stroke-width="1"/></svg><span class="t" style="left:709px;top:5px;font-size:11.5px;">Created</span>
<span class="t" style="left:778px;width:75px;top:5px;text-align:center;">0 %</span>
<span class="t" style="left:853px;width:105px;top:5px;text-align:center;font-size:11.1px;">30.09.2008 16:26</span>
<div class="hb"></div></div>
<div class="cat" style="top:344px;"><span class="t" style="left:1.500px;top:3px;font-size:10.9px;word-spacing:.6px;">Category: 3. Creating plan   [ My Tasks ]</span></div>
<div class="row sel" style="top:362px;"><div class="ind"></div><div class="cb"></div>
<div class="ln" style="left:68px;"></div>
<div class="ln" style="left:575px;"></div>
<div class="ln" style="left:686px;"></div>
<div class="ln" style="left:777px;"></div>
<div class="ln" style="left:852px;"></div>
<div style="left:69px;top:0;width:505px;height:21px;overflow:hidden;"><span class="t" style="left:4px;top:5px;font-size:10.72px;">3.1 Draw up team building plan in order to make usual working day as a part of team building process</span></div>
<svg style="left:579px;top:2px" width="17" height="17" viewBox="0 0 16 16"><circle cx="8" cy="8" r="7.500" fill="url(#g)"/><circle cx="8" cy="8" r="3.100" fill="#FFF6EA"/></svg><span class="t" style="left:598px;top:5px;">Normal</span>
<svg style="left:692px;top:3px" width="13" height="16" viewBox="0 0 13 16"><path d="M.5.5h8l4 4v11H.5z" fill="url(#d)" stroke="#8CA8D0" stroke-width="1"/><path d="M8.500.5v4h4" fill="#DCE8F8" stroke="#8CA8D0" stroke-width="1"/></svg><span class="t" style="left:709px;top:5px;font-size:11.5px;">Created</span>
<span class="t" style="left:778px;width:75px;top:5px;text-align:center;">0 %</span>
<span class="t" style="left:853px;width:105px;top:5px;text-align:center;font-size:11.1px;">30.09.2008 16:26</span>
<div class="hb"></div></div>
<div class="row sel" style="top:384px;"><div class="ind"></div><div class="cb"></div>
<div class="ln" style="left:68px;"></div>
<div class="ln" style="left:575px;"></div>
<div class="ln" style="left:686px;"></div>
<div class="ln" style="left:777px;"></div>
<div class="ln" style="left:852px;"></div>
<div style="left:69px;top:0;width:505px;height:21px;overflow:hidden;"><span class="t" style="left:4px;top:5px;font-size:10.72px;">3.2 Set team budget and discuss it with upper management</span></div>
<svg style="left:579px;top:2px" width="17" height="17" viewBox="0 0 16 16"><circle cx="8" cy="8" r="7.500" fill="url(#g)"/><circle cx="8" cy="8" r="3.100" fill="#FFF6EA"/></svg><span class="t" style="left:598px;top:5px;">Normal</span>
<svg style="left:692px;top:3px" width="13" height="16" viewBox="0 0 13 16"><path d="M.5.5h8l4 4v11H.5z" fill="url(#d)" stroke="#8CA8D0" stroke-width="1"/><path d="M8.500.5v4h4" fill="#DCE8F8" stroke="#8CA8D0" stroke-width="1"/></svg><span class="t" style="left:709px;top:5px;font-size:11.5px;">Created</span>
<span class="t" style="left:778px;width:75px;top:5px;text-align:center;">0 %</span>
<span class="t" style="left:853px;width:105px;top:5px;text-align:center;font-size:11.1px;">30.09.2008 16:27</span>
<div class="hb"></div></div>
<div class="row" style="top:406px;"><div class="ind"></div><div class="cb"></div>
<div class="ln" style="left:68px;"></div>
<div class="ln" style="left:575px;"></div>
<div class="ln" style="left:686px;"></div>
<div class="ln" style="left:777px;"></div>
<div class="ln" style="left:852px;"></div>
<div style="left:69px;top:0;width:505px;height:21px;overflow:hidden;"><span class="t" style="left:4px;top:5px;font-size:10.72px;">3.3 Discuss team building problems on regular meetings</span></div>
<svg style="left:579px;top:2px" width="17" height="17" viewBox="0 0 16 16"><circle cx="8" cy="8" r="7.500" fill="url(#g)"/><circle cx="8" cy="8" r="3.100" fill="#FFF6EA"/></svg><span class="t" style="left:598px;top:5px;">Normal</span>
<svg style="left:692px;top:3px" width="13" height="16" viewBox="0 0 13 16"><path d="M.5.5h8l4 4v11H.5z" fill="url(#d)" stroke="#8CA8D0" stroke-width="1"/><path d="M8.500.5v4h4" fill="#DCE8F8" stroke="#8CA8D0" stroke-width="1"/></svg><span class="t" style="left:709px;top:5px;font-size:11.5px;">Created</span>
<span class="t" style="left:778px;width:75px;top:5px;text-align:center;">0 %</span>
<span class="t" style="left:853px;width:105px;top:5px;text-align:center;font-size:11.1px;">30.09.2008 16:27</span>
<div class="hb"></div></div>
<div class="row" style="top:428px;"><div class="ind"></div><div class="cb"></div>
<div class="ln" style="left:68px;"></div>
<div class="ln" style="left:575px;"></div>
<div class="ln" style="left:686px;"></div>
<div class="ln" style="left:777px;"></div>
<div class="ln" style="left:852px;"></div>
<div style="left:69px;top:0;width:505px;height:21px;overflow:hidden;"><span class="t" style="left:4px;top:5px;font-size:10.72px;">3.4 Schedule and document team building events and share them among team members</span></div>
<svg style="left:579px;top:2px" width="17" height="17" viewBox="0 0 16 16"><circle cx="8" cy="8" r="7.500" fill="url(#g)"/><circle cx="8" cy="8" r="3.100" fill="#FFF6EA"/></svg><span class="t" style="left:598px;top:5px;">Normal</span>
<svg style="left:692px;top:3px" width="13" height="16" viewBox="0 0 13 16"><path d="M.5.5h8l4 4v11H.5z" fill="url(#d)" stroke="#8CA8D0" stroke-width="1"/><path d="M8.500.5v4h4" fill="#DCE8F8" stroke="#8CA8D0" stroke-width="1"/></svg><span class="t" style="left:709px;top:5px;font-size:11.5px;">Created</span>
<span class="t" style="left:778px;width:75px;top:5px;text-align:center;">0 %</span>
<span class="t" style="left:853px;width:105px;top:5px;text-align:center;font-size:11.1px;">30.09.2008 16:27</span>
<div class="hb"></div></div>
<div class="row" style="top:450px;"><div class="ind"></div><div class="cb"></div>
<div class="ln" style="left:68px;"></div>
<div class="ln" style="left:575px;"></div>
<div class="ln" style="left:686px;"></div>
<div class="ln" style="left:777px;"></div>
<div class="ln" style="left:852px;"></div>
<div style="left:69px;top:0;width:505px;height:21px;overflow:hidden;"><span class="t" style="left:4px;top:5px;font-size:10.72px;">3.5 Set time expectation for each event</span></div>
<svg style="left:579px;top:2px" width="17" height="17" viewBox="0 0 16 16"><circle cx="8" cy="8" r="7.500" fill="url(#g)"/><circle cx="8" cy="8" r="3.100" fill="#FFF6EA"/></svg><span class="t" style="left:598px;top:5px;">Normal</span>
<svg style="left:692px;top:3px" width="13" height="16" viewBox="0 0 13 16"><path d="M.5.5h8l4 4v11H.5z" fill="url(#d)" stroke="#8CA8D0" stroke-width="1"/><path d="M8.500.5v4h4" fill="#DCE8F8" stroke="#8CA8D0" stroke-width="1"/></svg><span class="t" style="left:709px;top:5px;font-size:11.5px;">Created</span>
<span class="t" style="left:778px;width:75px;top:5px;text-align:center;">0 %</span>
<span class="t" style="left:853px;width:105px;top:5px;text-align:center;font-size:11.1px;">30.09.2008 16:27</span>
<div class="hb"></div></div>
<div class="row" style="top:472px;"><div class="ind"></div><div class="cb"></div>
<div class="ln" style="left:68px;"></div>
<div class="ln" style="left:575px;"></div>
<div class="ln" style="left:686px;"></div>
<div class="ln" style="left:777px;"></div>
<div class="ln" style="left:852px;"></div>
<div style="left:69px;top:0;width:505px;height:21px;overflow:hidden;"><span class="t" style="left:4px;top:5px;font-size:10.72px;">3.6 Consider weather you need to obtain professional training services</span></div>
<svg style="left:579px;top:2px" width="17" height="17" viewBox="0 0 16 16"><circle cx="8" cy="8" r="7.500" fill="url(#g)"/><circle cx="8" cy="8" r="3.100" fill="#FFF6EA"/></svg><span class="t" style="left:598px;top:5px;">Normal</span>
<svg style="left:692px;top:3px" width="13" height="16" viewBox="0 0 13 16"><path d="M.5.5h8l4 4v11H.5z" fill="url(#d)" stroke="#8CA8D0" stroke-width="1"/><path d="M8.500.5v4h4" fill="#DCE8F8" stroke="#8CA8D0" stroke-width="1"/></svg><span class="t" style="left:709px;top:5px;font-size:11.5px;">Created</span>
<span class="t" style="left:778px;width:75px;top:5px;text-align:center;">0 %</span>
<span class="t" style="left:853px;width:105px;top:5px;text-align:center;font-size:11.1px;">30.09.2008 16:27</span>
<div class="hb"></div></div>
<div class="row" style="top:494px;"><div class="ind"></div><div class="cb"></div>
<div class="ln" style="left:68px;"></div>
<div class="ln" style="left:575px;"></div>
<div class="ln" style="left:686px;"></div>
<div class="ln" style="left:777px;"></div>
<div class="ln" style="left:852px;"></div>
<div style="left:69px;top:0;width:505px;height:21px;overflow:hidden;"><span class="t" style="left:4px;top:5px;font-size:10.72px;">3.7 Schedule trainings and meetings</span></div>
<svg style="left:579px;top:2px" width="17" height="17" viewBox="0 0 16 16"><circle cx="8" cy="8" r="7.500" fill="url(#g)"/><circle cx="8" cy="8" r="3.100" fill="#FFF6EA"/></svg><span class="t" style="left:598px;top:5px;">Normal</span>
<svg style="left:692px;top:3px" width="13" height="16" viewBox="0 0 13 16"><path d="M.5.5h8l4 4v11H.5z" fill="url(#d)" stroke="#8CA8D0" stroke-width="1"/><path d="M8.500.5v4h4" fill="#DCE8F8" stroke="#8CA8D0" stroke-width="1"/></svg><span class="t" style="left:709px;top:5px;font-size:11.5px;">Created</span>
<span class="t" style="left:778px;width:75px;top:5px;text-align:center;">0 %</span>
<span class="t" style="left:853px;width:105px;top:5px;text-align:center;font-size:11.1px;">30.09.2008 16:27</span>
<div class="hb"></div></div>
<div class="row" style="top:516px;"><div class="ind"></div><div class="cb"></div>
<div class="ln" style="left:68px;"></div>
<div class="ln" style="left:575px;"></div>
<div class="ln" style="left:686px;"></div>
<div class="ln" style="left:777px;"></div>
<div class="ln" style="left:852px;"></div>
<div style="left:69px;top:0;width:505px;height:21px;overflow:hidden;"><span class="t" style="left:4px;top:5px;font-size:10.72px;">3.8 Choose groupware to improve task performance of team members like VIP Task Manager</span></div>
<svg style="left:579px;top:2px" width="17" height="17" viewBox="0 0 16 16"><circle cx="8" cy="8" r="7.500" fill="url(#g)"/><circle cx="8" cy="8" r="3.100" fill="#FFF6EA"/></svg><span class="t" style="left:598px;top:5px;">Normal</span>
<svg style="left:692px;top:3px" width="13" height="16" viewBox="0 0 13 16"><path d="M.5.5h8l4 4v11H.5z" fill="url(#d)" stroke="#8CA8D0" stroke-width="1"/><path d="M8.500.5v4h4" fill="#DCE8F8" stroke="#8CA8D0" stroke-width="1"/></svg><span class="t" style="left:709px;top:5px;font-size:11.5px;">Created</span>
<span class="t" style="left:778px;width:75px;top:5px;text-align:center;">0 %</span>
<span class="t" style="left:853px;width:105px;top:5px;text-align:center;font-size:11.1px;">30.09.2008 16:27</span>
<div class="hb"></div></div>
<div class="cat" style="top:538px;"><span class="t" style="left:1.500px;top:3px;font-size:10.9px;word-spacing:.6px;">Category: 4. Explaining roles and responsibilities   [ My Tasks ]</span></div>
<div class="row" style="top:556px;"><div class="ind"></div><div class="cb"></div>
<div class="ln" style="left:68px;"></div>
<div class="ln" style="left:575px;"></div>
<div class="ln" style="left:686px;"></div>
<div class="ln" style="left:777px;"></div>
<div class="ln" style="left:852px;"></div>
<div style="left:69px;top:0;width:505px;height:21px;overflow:hidden;"><span class="t" style="left:4px;top:5px;font-size:10.72px;">4.1 Avoid ambiguity of roles and responsibilities</span></div>
<svg style="left:579px;top:2px" width="17" height="17" viewBox="0 0 16 16"><circle cx="8" cy="8" r="7.500" fill="url(#g)"/><circle cx="8" cy="8" r="3.100" fill="#FFF6EA"/></svg><span class="t" style="left:598px;top:5px;">Normal</span>
<svg style="left:692px;top:3px" width="13" height="16" viewBox="0 0 13 16"><path d="M.5.5h8l4 4v11H.5z" fill="url(#d)" stroke="#8CA8D0" stroke-width="1"/><path d="M8.500.5v4h4" fill="#DCE8F8" stroke="#8CA8D0" stroke-width="1"/></svg><span class="t" style="left:709px;top:5px;font-size:11.5px;">Created</span>
<span class="t" style="left:778px;width:75px;top:5px;text-align:center;">0 %</span>
<span class="t" style="left:853px;width:105px;top:5px;text-align:center;font-size:11.1px;">30.09.2008 16:27</span>
<div class="hb"></div></div>
<div class="row" style="top:578px;"><div class="ind"></div><div class="cb"></div>
<div class="ln" style="left:68px;"></div>
<div class="ln" style="left:575px;"></div>
<div class="ln" style="left:686px;"></div>
<div class="ln" style="left:777px;"></div>
<div class="ln" style="left:852px;"></div>
<div style="left:69px;top:0;width:505px;height:21px;overflow:hidden;"><span class="t" style="left:4px;top:5px;font-size:10.72px;">4.2 Define how roles and responsibilities of your employees are crossed with roles and responsibilities of</span></div>
<svg style="left:579px;top:2px" width="17" height="17" viewBox="0 0 16 16"><circle cx="8" cy="8" r="7.500" fill="url(#g)"/><circle cx="8" cy="8" r="3.100" fill="#FFF6EA"/></svg><span class="t" style="left:598px;top:5px;">Normal</span>
<svg style="left:692px;top:3px" width="13" height="16" viewBox="0 0 13 16"><path d="M.5.5h8l4 4v11H.5z" fill="url(#d)" stroke="#8CA8D0" stroke-width="1"/><path d="M8.500.5v4h4" fill="#DCE8F8" stroke="#8CA8D0" stroke-width="1"/></svg><span class="t" style="left:709px;top:5px;font-size:11.5px;">Created</span>
<span class="t" style="left:778px;width:75px;top:5px;text-align:center;">0 %</span>
<span class="t" style="left:853px;width:105px;top:5px;text-align:center;font-size:11.1px;">30.09.2008 16:27</span>
<div class="hb"></div></div>
<div class="row" style="top:600px;"><div class="ind"></div><div class="cb"></div>
<div class="ln" style="left:68px;"></div>
<div class="ln" style="left:575px;"></div>
<div class="ln" style="left:686px;"></div>
<div class="ln" style="left:777px;"></div>
<div class="ln" style="left:852px;"></div>
<div style="left:69px;top:0;width:505px;height:21px;overflow:hidden;"><span class="t" style="left:4px;top:5px;font-size:10.72px;">4.3 Find and prevent points of probable conflicts between team members</span></div>
<svg style="left:579px;top:2px" width="17" height="17" viewBox="0 0 16 16"><circle cx="8" cy="8" r="7.500" fill="url(#g)"/><circle cx="8" cy="8" r="3.100" fill="#FFF6EA"/></svg><span class="t" style="left:598px;top:5px;">Normal</span>
<svg style="left:692px;top:3px" width="13" height="16" viewBox="0 0 13 16"><path d="M.5.5h8l4 4v11H.5z" fill="url(#d)" stroke="#8CA8D0" stroke-width="1"/><path d="M8.500.5v4h4" fill="#DCE8F8" stroke="#8CA8D0" stroke-width="1"/></svg><span class="t" style="left:709px;top:5px;font-size:11.5px;">Created</span>
<span class="t" style="left:778px;width:75px;top:5px;text-align:center;">0 %</span>
<span class="t" style="left:853px;width:105px;top:5px;text-align:center;font-size:11.1px;">30.09.2008 16:27</span>
<div class="hb"></div></div>
<div class="row" style="top:622px;"><div class="ind"></div><div class="cb"></div>
<div class="ln" style="left:68px;"></div>
<div class="ln" style="left:575px;"></div>
<div class="ln" style="left:686px;"></div>
<div class="ln" style="left:777px;"></div>
<div class="ln" style="left:852px;"></div>
<div style="left:69px;top:0;width:505px;height:21px;overflow:hidden;"><span class="t" style="left:4px;top:5px;font-size:10.72px;">4.4 Explain roles and responsibilities to each employee</span></div>
<svg style="left:579px;top:2px" width="17" height="17" viewBox="0 0 16 16"><circle cx="8" cy="8" r="7.500" fill="url(#g)"/><circle cx="8" cy="8" r="3.100" fill="#FFF6EA"/></svg><span class="t" style="left:598px;top:5px;">Normal</span>
<svg style="left:692px;top:3px" width="13" height="16" viewBox="0 0 13 16"><path d="M.5.5h8l4 4v11H.5z" fill="url(#d)" stroke="#8CA8D0" stroke-width="1"/><path d="M8.500.5v4h4" fill="#DCE8F8" stroke="#8CA8D0" stroke-width="1"/></svg><span class="t" style="left:709px;top:5px;font-size:11.5px;">Created</span>
<span class="t" style="left:778px;width:75px;top:5px;text-align:center;">0 %</span>
<span class="t" style="left:853px;width:105px;top:5px;text-align:center;font-size:11.1px;">30.09.2008 16:27</span>
<div class="hb"></div></div>
<div class="row" style="top:644px;"><div class="ind"></div><div class="cb"></div>
<div class="ln" style="left:68px;"></div>
<div class="ln" style="left:575px;"></div>
<div class="ln" style="left:686px;"></div>
<div class="ln" style="left:777px;"></div>
<div class="ln" style="left:852px;"></div>
<div style="left:69px;top:0;width:505px;height:21px;overflow:hidden;"><span class="t" style="left:4px;top:5px;font-size:10.72px;">4.5 Emphasis how actions of each team member support the company mission</span></div>
<svg style="left:579px;top:2px" width="17" height="17" viewBox="0 0 16 16"><circle cx="8" cy="8" r="7.500" fill="url(#g)"/><circle cx="8" cy="8" r="3.100" fill="#FFF6EA"/></svg><span class="t" style="left:598px;top:5px;">Normal</span>
<svg style="left:692px;top:3px" width="13" height="16" viewBox="0 0 13 16"><path d="M.5.5h8l4 4v11H.5z" fill="url(#d)" stroke="#8CA8D0" stroke-width="1"/><path d="M8.500.5v4h4" fill="#DCE8F8" stroke="#8CA8D0" stroke-width="1"/></svg><span class="t" style="left:709px;top:5px;font-size:11.5px;">Created</span>
<span class="t" style="left:778px;width:75px;top:5px;text-align:center;">0 %</span>
<span class="t" style="left:853px;width:105px;top:5px;text-align:center;font-size:11.1px;">30.09.2008 16:27</span>
<div class="hb"></div></div>
<div class="row sel" style="top:666px;"><div class="ind"></div><div class="cb"></div>
<div class="ln" style="left:68px;"></div>
<div class="ln" style="left:575px;"></div>
<div class="ln" style="left:686px;"></div>
<div class="ln" style="left:777px;"></div>
<div class="ln" style="left:852px;"></div>
<div style="left:69px;top:0;width:505px;height:21px;overflow:hidden;"><span class="t" style="left:4px;top:5px;font-size:10.72px;">4.6 Set standards are rules in work with colleagues and between business partners, what behavior is</span></div>
<svg style="left:579px;top:2px" width="17" height="17" viewBox="0 0 16 16"><circle cx="8" cy="8" r="7.500" fill="url(#g)"/><circle cx="8" cy="8" r="3.100" fill="#FFF6EA"/></svg><span class="t" style="left:598px;top:5px;">Normal</span>
<svg style="left:692px;top:3px" width="13" height="16" viewBox="0 0 13 16"><path d="M.5.5h8l4 4v11H.5z" fill="url(#d)" stroke="#8CA8D0" stroke-width="1"/><path d="M8.500.5v4h4" fill="#DCE8F8" stroke="#8CA8D0" stroke-width="1"/></svg><span class="t" style="left:709px;top:5px;font-size:11.5px;">Created</span>
<span class="t" style="left:778px;width:75px;top:5px;text-align:center;">0 %</span>
<span class="t" style="left:853px;width:105px;top:5px;text-align:center;font-size:11.1px;">30.09.2008 16:27</span>
<div class="hb"></div></div>
<div class="row sel" style="top:688px;"><div class="ind"></div><div class="cb"></div>
<div class="ln" style="left:68px;"></div>
<div class="ln" style="left:575px;"></div>
<div class="ln" style="left:686px;"></div>
<div class="ln" style="left:777px;"></div>
<div class="ln" style="left:852px;"></div>
<div style="left:69px;top:0;width:505px;height:21px;overflow:hidden;"><span class="t" style="left:4px;top:5px;font-size:10.72px;">4.7 Apply delegation of powers to efficiently allocate roles and responsibilities among team members</span></div>
<svg style="left:579px;top:2px" width="17" height="17" viewBox="0 0 16 16"><circle cx="8" cy="8" r="7.500" fill="url(#g)"/><circle cx="8" cy="8" r="3.100" fill="#FFF6EA"/></svg><span class="t" style="left:598px;top:5px;">Normal</span>
<svg style="left:692px;top:3px" width="13" height="16" viewBox="0 0 13 16"><path d="M.5.5h8l4 4v11H.5z" fill="url(#d)" stroke="#8CA8D0" stroke-width="1"/><path d="M8.500.5v4h4" fill="#DCE8F8" stroke="#8CA8D0" stroke-width="1"/></svg><span class="t" style="left:709px;top:5px;font-size:11.5px;">Created</span>
<span class="t" style="left:778px;width:75px;top:5px;text-align:center;">0 %</span>
<span class="t" style="left:853px;width:105px;top:5px;text-align:center;font-size:11.1px;">30.09.2008 16:27</span>
<div class="hb"></div></div>
<div class="row" style="top:710px;"><div class="ind"></div><div class="cb"></div>
<div class="ln" style="left:68px;"></div>
<div class="ln" style="left:575px;"></div>
<div class="ln" style="left:686px;"></div>
<div class="ln" style="left:777px;"></div>
<div class="ln" style="left:852px;"></div>
<div style="left:69px;top:0;width:505px;height:21px;overflow:hidden;"><span class="t" style="left:4px;top:5px;font-size:10.72px;">4.8 Set penalties and bonuses</span></div>
<svg style="left:579px;top:2px" width="17" height="17" viewBox="0 0 16 16"><circle cx="8" cy="8" r="7.500" fill="url(#g)"/><circle cx="8" cy="8" r="3.100" fill="#FFF6EA"/></svg><span class="t" style="left:598px;top:5px;">Normal</span>
<svg style="left:692px;top:3px" width="13" height="16" viewBox="0 0 13 16"><path d="M.5.5h8l4 4v11H.5z" fill="url(#d)" stroke="#8CA8D0" stroke-width="1"/><path d="M8.500.5v4h4" fill="#DCE8F8" stroke="#8CA8D0" stroke-width="1"/></svg><span class="t" style="left:709px;top:5px;font-size:11.5px;">Created</span>
<span class="t" style="left:778px;width:75px;top:5px;text-align:center;">0 %</span>
<span class="t" style="left:853px;width:105px;top:5px;text-align:center;font-size:11.1px;">30.09.2008 16:27</span>
<div class="hb"></div></div>
<div class="cat" style="top:732px;"><span class="t" style="left:1.500px;top:3px;font-size:10.9px;word-spacing:.6px;">Category: 5. Stimulating and developing team   [ My Tasks ]</span></div>
<div class="row" style="top:750px;"><div class="ind"></div><div class="cb"></div>
<div class="ln" style="left:68px;"></div>
<div class="ln" style="left:575px;"></div>
<div class="ln" style="left:686px;"></div>
<div class="ln" style="left:777px;"></div>
<div class="ln" style="left:852px;"></div>
<div style="left:69px;top:0;width:505px;height:21px;overflow:hidden;"><span class="t" style="left:4px;top:5px;font-size:10.72px;">5.1 Remember the process of team building should be amusing and involve all members of the company</span></div>
<svg style="left:579px;top:2px" width="17" height="17" viewBox="0 0 16 16"><circle cx="8" cy="8" r="7.500" fill="url(#g)"/><circle cx="8" cy="8" r="3.100" fill="#FFF6EA"/></svg><span class="t" style="left:598px;top:5px;">Normal</span>
<svg style="left:692px;top:3px" width="13" height="16" viewBox="0 0 13 16"><path d="M.5.5h8l4 4v11H.5z" fill="url(#d)" stroke="#8CA8D0" stroke-width="1"/><path d="M8.500.5v4h4" fill="#DCE8F8" stroke="#8CA8D0" stroke-width="1"/></svg><span class="t" style="left:709px;top:5px;font-size:11.5px;">Created</span>
<span class="t" style="left:778px;width:75px;top:5px;text-align:center;">0 %</span>
<span class="t" style="left:853px;width:105px;top:5px;text-align:center;font-size:11.1px;">30.09.2008 16:28</span>
<div class="hb"></div></div>
<div class="row" style="top:772px;"><div class="ind"></div><div class="cb"></div>
<div class="ln" style="left:68px;"></div>
<div class="ln" style="left:575px;"></div>
<div class="ln" style="left:686px;"></div>
<div class="ln" style="left:777px;"></div>
<div class="ln" style="left:852px;"></div>
<div style="left:69px;top:0;width:505px;height:21px;overflow:hidden;"><span class="t" style="left:4px;top:5px;font-size:10.72px;">5.2 Plan structure and measures which will be both useful to team building process and interesting to all</span></div>
<svg style="left:579px;top:2px" width="17" height="17" viewBox="0 0 16 16"><circle cx="8" cy="8" r="7.500" fill="url(#g)"/><circle cx="8" cy="8" r="3.100" fill="#FFF6EA"/></svg><span class="t" style="left:598px;top:5px;">Normal</span>
<svg style="left:692px;top:3px" width="13" height="16" viewBox="0 0 13 16"><path d="M.5.5h8l4 4v11H.5z" fill="url(#d)" stroke="#8CA8D0" stroke-width="1"/><path d="M8.500.5v4h4" fill="#DCE8F8" stroke="#8CA8D0" stroke-width="1"/></svg><span class="t" style="left:709px;top:5px;font-size:11.5px;">Created</span>
<span class="t" style="left:778px;width:75px;top:5px;text-align:center;">0 %</span>
<span class="t" style="left:853px;width:105px;top:5px;text-align:center;font-size:11.1px;">30.09.2008 16:28</span>
<div class="hb"></div></div>
<div class="row" style="top:794px;"><div class="ind"></div><div class="cb"></div>
<div class="ln" style="left:68px;"></div>
<div class="ln" style="left:575px;"></div>
<div class="ln" style="left:686px;"></div>
<div class="ln" style="left:777px;"></div>
<div class="ln" style="left:852px;"></div>
<div style="left:69px;top:0;width:505px;height:21px;overflow:hidden;"><span class="t" style="left:4px;top:5px;font-size:10.72px;">5.3 Encourage team members. If a team member has reached his goals, all members should be awarded</span></div>
<svg style="left:579px;top:2px" width="17" height="17" viewBox="0 0 16 16"><circle cx="8" cy="8" r="7.500" fill="url(#g)"/><circle cx="8" cy="8" r="3.100" fill="#FFF6EA"/></svg><span class="t" style="left:598px;top:5px;">Normal</span>
<svg style="left:692px;top:3px" width="13" height="16" viewBox="0 0 13 16"><path d="M.5.5h8l4 4v11H.5z" fill="url(#d)" stroke="#8CA8D0" stroke-width="1"/><path d="M8.500.5v4h4" fill="#DCE8F8" stroke="#8CA8D0" stroke-width="1"/></svg><span class="t" style="left:709px;top:5px;font-size:11.5px;">Created</span>
<span class="t" style="left:778px;width:75px;top:5px;text-align:center;">0 %</span>
<span class="t" style="left:853px;width:105px;top:5px;text-align:center;font-size:11.1px;">30.09.2008 16:28</span>
<div class="hb"></div></div>
<div class="row sel" style="top:816px;"><div class="ind"></div><div class="cb"></div>
<div class="ln" style="left:68px;"></div>
<div class="ln" style="left:575px;"></div>
<div class="ln" style="left:686px;"></div>
<div class="ln" style="left:777px;"></div>
<div class="ln" style="left:852px;"></div>
<div style="left:69px;top:0;width:505px;height:21px;overflow:hidden;"><span class="t" style="left:4px;top:5px;font-size:10.72px;">5.4 Encourage people in the team. Everyone should understand that he is important for the team and</span></div>
<svg style="left:579px;top:2px" width="17" height="17" viewBox="0 0 16 16"><circle cx="8" cy="8" r="7.500" fill="url(#g)"/><circle cx="8" cy="8" r="3.100" fill="#FFF6EA"/></svg><span class="t" style="left:598px;top:5px;">Normal</span>
<svg style="left:692px;top:3px" width="13" height="16" viewBox="0 0 13 16"><path d="M.5.5h8l4 4v11H.5z" fill="url(#d)" stroke="#8CA8D0" stroke-width="1"/><path d="M8.500.5v4h4" fill="#DCE8F8" stroke="#8CA8D0" stroke-width="1"/></svg><span class="t" style="left:709px;top:5px;font-size:11.5px;">Created</span>
<span class="t" style="left:778px;width:75px;top:5px;text-align:center;">0 %</span>
<span class="t" style="left:853px;width:105px;top:5px;text-align:center;font-size:11.1px;">30.09.2008 16:28</span>
<div class="hb"></div></div>
<div class="row" style="top:838px;"><div class="ind"></div><div class="cb"></div>
<div class="ln" style="left:68px;"></div>
<div class="ln" style="left:575px;"></div>
<div class="ln" style="left:686px;"></div>
<div class="ln" style="left:777px;"></div>
<div class="ln" style="left:852px;"></div>
<div style="left:69px;top:0;width:505px;height:21px;overflow:hidden;"><span class="t" style="left:4px;top:5px;font-size:10.72px;">5.5 Support feedbacks. You should be able to accept both positive and problematic responses</span></div>
<svg style="left:579px;top:2px" width="17" height="17" viewBox="0 0 16 16"><circle cx="8" cy="8" r="7.500" fill="url(#g)"/><circle cx="8" cy="8" r="3.100" fill="#FFF6EA"/></svg><span class="t" style="left:598px;top:5px;">Normal</span>
<svg style="left:692px;top:3px" width="13" height="16" viewBox="0 0 13 16"><path d="M.5.5h8l4 4v11H.5z" fill="url(#d)" stroke="#8CA8D0" stroke-width="1"/><path d="M8.500.5v4h4" fill="#DCE8F8" stroke="#8CA8D0" stroke-width="1"/></svg><span class="t" style="left:709px;top:5px;font-size:11.5px;">Created</span>
<span class="t" style="left:778px;width:75px;top:5px;text-align:center;">0 %</span>
<span class="t" style="left:853px;width:105px;top:5px;text-align:center;font-size:11.1px;">30.09.2008 16:28</span>
<div class="hb"></div></div>
<div class="row" style="top:860px;"><div class="ind"></div><div class="cb"></div>
<div class="ln" style="left:68px;"></div>
<div class="ln" style="left:575px;"></div>
<div class="ln" style="left:686px;"></div>
<div class="ln" style="left:777px;"></div>
<div class="ln" style="left:852px;"></div>
<div style="left:69px;top:0;width:505px;height:21px;overflow:hidden;"><span class="t" style="left:4px;top:5px;font-size:10.72px;">5.6 Hold trainings and team meetings out of office as conditions at office can distract very much</span></div>
<svg style="left:579px;top:2px" width="17" height="17" viewBox="0 0 16 16"><circle cx="8" cy="8" r="7.500" fill="url(#g)"/><circle cx="8" cy="8" r="3.100" fill="#FFF6EA"/></svg><span class="t" style="left:598px;top:5px;">Normal</span>
<svg style="left:692px;top:3px" width="13" height="16" viewBox="0 0 13 16"><path d="M.5.5h8l4 4v11H.5z" fill="url(#d)" stroke="#8CA8D0" stroke-width="1"/><path d="M8.500.5v4h4" fill="#DCE8F8" stroke="#8CA8D0" stroke-width="1"/></svg><span class="t" style="left:709px;top:5px;font-size:11.5px;">Created</span>
<span class="t" style="left:778px;width:75px;top:5px;text-align:center;">0 %</span>
<span class="t" style="left:853px;width:105px;top:5px;text-align:center;font-size:11.1px;">30.09.2008 16:28</span>
<div class="hb"></div></div>
<div class="row" style="top:882px;"><div class="ind"></div><div class="cb"></div>
<div class="ln" style="left:68px;"></div>
<div class="ln" style="left:575px;"></div>
<div class="ln" style="left:686px;"></div>
<div class="ln" style="left:777px;"></div>
<div class="ln" style="left:852px;"></div>
<div style="left:69px;top:0;width:505px;height:21px;overflow:hidden;"><span class="t" style="left:4px;top:5px;font-size:10.72px;">5.7 Provide employees with all necessary information. They should take part in team building process</span></div>
<svg style="left:579px;top:2px" width="17" height="17" viewBox="0 0 16 16"><circle cx="8" cy="8" r="7.500" fill="url(#g)"/><circle cx="8" cy="8" r="3.100" fill="#FFF6EA"/></svg><span class="t" style="left:598px;top:5px;">Normal</span>
<svg style="left:692px;top:3px" width="13" height="16" viewBox="0 0 13 16"><path d="M.5.5h8l4 4v11H.5z" fill="url(#d)" stroke="#8CA8D0" stroke-width="1"/><path d="M8.500.5v4h4" fill="#DCE8F8" stroke="#8CA8D0" stroke-width="1"/></svg><span class="t" style="left:709px;top:5px;font-size:11.5px;">Created</span>
<span class="t" style="left:778px;width:75px;top:5px;text-align:center;">0 %</span>
<span class="t" style="left:853px;width:105px;top:5px;text-align:center;font-size:11.1px;">30.09.2008 16:28</span>
<div class="hb"></div></div>
<div class="row" style="top:904px;"><div class="ind"></div><div class="cb"></div>
<div class="ln" style="left:68px;"></div>
<div class="ln" style="left:575px;"></div>
<div class="ln" style="left:686px;"></div>
<div class="ln" style="left:777px;"></div>
<div class="ln" style="left:852px;"></div>
<div style="left:69px;top:0;width:505px;height:21px;overflow:hidden;"><span class="t" style="left:4px;top:5px;font-size:10.72px;">5.8 Create conditions for free communications between team members</span></div>
<svg style="left:579px;top:2px" width="17" height="17" viewBox="0 0 16 16"><circle cx="8" cy="8" r="7.500" fill="url(#g)"/><circle cx="8" cy="8" r="3.100" fill="#FFF6EA"/></svg><span class="t" style="left:598px;top:5px;">Normal</span>
<svg style="left:692px;top:3px" width="13" height="16" viewBox="0 0 13 16"><path d="M.5.5h8l4 4v11H.5z" fill="url(#d)" stroke="#8CA8D0" stroke-width="1"/><path d="M8.500.5v4h4" fill="#DCE8F8" stroke="#8CA8D0" stroke-width="1"/></svg><span class="t" style="left:709px;top:5px;font-size:11.5px;">Created</span>
<span class="t" style="left:778px;width:75px;top:5px;text-align:center;">0 %</span>
<span class="t" style="left:853px;width:105px;top:5px;text-align:center;font-size:11.1px;">30.09.2008 16:28</span>
<div class="hb"></div></div>
<div class="row sel" style="top:926px;"><div class="ind"></div><div class="cb"></div>
<div class="ln" style="left:68px;"></div>
<div class="ln" style="left:575px;"></div>
<div class="ln" style="left:686px;"></div>
<div class="ln" style="left:777px;"></div>
<div class="ln" style="left:852px;"></div>
<div style="left:69px;top:0;width:505px;height:21px;overflow:hidden;"><span class="t" style="left:4px;top:5px;font-size:10.72px;">5.9 Find out what team members require productivity improvement</span></div>
<svg style="left:579px;top:2px" width="17" height="17" viewBox="0 0 16 16"><circle cx="8" cy="8" r="7.500" fill="url(#g)"/><circle cx="8" cy="8" r="3.100" fill="#FFF6EA"/></svg><span class="t" style="left:598px;top:5px;">Normal</span>
<svg style="left:692px;top:3px" width="13" height="16" viewBox="0 0 13 16"><path d="M.5.5h8l4 4v11H.5z" fill="url(#d)" stroke="#8CA8D0" stroke-width="1"/><path d="M8.500.5v4h4" fill="#DCE8F8" stroke="#8CA8D0" stroke-width="1"/></svg><span class="t" style="left:709px;top:5px;font-size:11.5px;">Created</span>
<span class="t" style="left:778px;width:75px;top:5px;text-align:center;">0 %</span>
<span class="t" style="left:853px;width:105px;top:5px;text-align:center;font-size:11.1px;">30.09.2008 16:28</span>
<div class="hb"></div></div>
<div class="row" style="top:948px;"><div class="ind"></div><div class="cb"></div>
<div class="ln" style="left:68px;"></div>
<div class="ln" style="left:575px;"></div>
<div class="ln" style="left:686px;"></div>
<div class="ln" style="left:777px;"></div>
<div class="ln" style="left:852px;"></div>
<div style="left:69px;top:0;width:505px;height:21px;overflow:hidden;"><span class="t" style="left:4px;top:5px;font-size:10.72px;">5.10 Create a suitable environment in which employees will be focused on team building</span></div>
<svg style="left:579px;top:2px" width="17" height="17" viewBox="0 0 16 16"><circle cx="8" cy="8" r="7.500" fill="url(#g)"/><circle cx="8" cy="8" r="3.100" fill="#FFF6EA"/></svg><span class="t" style="left:598px;top:5px;">Normal</span>
<svg style="left:692px;top:3px" width="13" height="16" viewBox="0 0 13 16"><path d="M.5.5h8l4 4v11H.5z" fill="url(#d)" stroke="#8CA8D0" stroke-width="1"/><path d="M8.500.5v4h4" fill="#DCE8F8" stroke="#8CA8D0" stroke-width="1"/></svg><span class="t" style="left:709px;top:5px;font-size:11.5px;">Created</span>
<span class="t" style="left:778px;width:75px;top:5px;text-align:center;">0 %</span>
<span class="t" style="left:853px;width:105px;top:5px;text-align:center;font-size:11.1px;">30.09.2008 16:28</span>
<div class="hb"></div></div>
<div style="left:319px;top:976px;width:958px;height:25px;background:#ECE9D8;border-top:1px solid #D6D2C2;"></div>
<div style="left:391px;top:980px;width:504px;height:19px;background:#F1EFE4;border:1px solid #B5B2A2;border-right-color:#fff;border-bottom-color:#fff;"><span class="t" style="left:4px;top:2px;">Count: 34</span></div>
<div style="left:896px;top:130px;width:110px;height:121px;background:#fff;border:1px solid #000;">
<span class="t" style="left:19px;top:2px;">(All)</span>
<span class="t" style="left:19px;top:19px;">Lowest</span>
<span class="t" style="left:19px;top:36px;">Low</span>
<span class="t" style="left:19px;top:53px;">Normal</span>
<span class="t" style="left:19px;top:70px;">High</span>
<span class="t" style="left:19px;top:87px;">Highest</span>
<div style="left:17px;top:102px;width:91px;height:17px;background:#316AC5;"></div>
<span class="t" style="left:19px;top:104px;color:#fff;">Urgent</span>
</div>
</div></body></html>
